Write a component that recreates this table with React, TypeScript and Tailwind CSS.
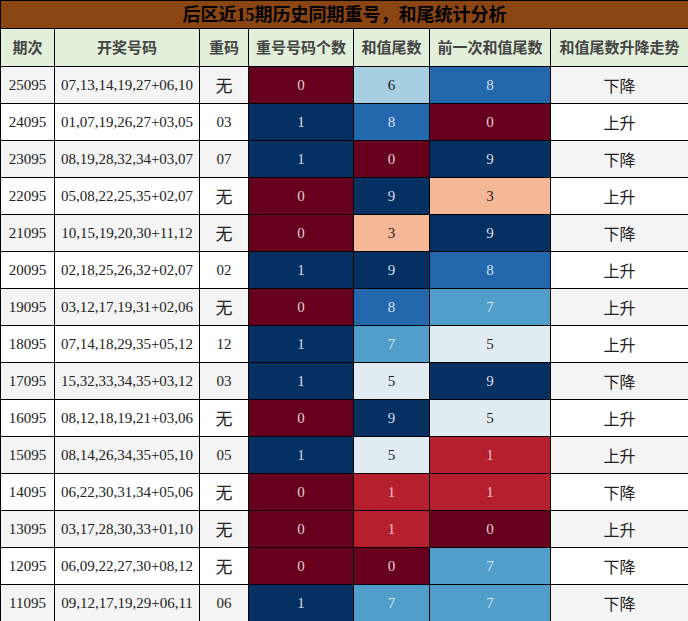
// 后区同期重号 / 和值尾数统计表
const rows: [string, string, string, number, number, number, string][] = [
  ['25095', '07,13,14,19,27+06,10', '无', 0, 6, 8, '下降'],
  ['24095', '01,07,19,26,27+03,05', '03', 1, 8, 0, '上升'],
  ['23095', '08,19,28,32,34+03,07', '07', 1, 0, 9, '下降'],
  ['22095', '05,08,22,25,35+02,07', '无', 0, 9, 3, '上升'],
  ['21095', '10,15,19,20,30+11,12', '无', 0, 3, 9, '下降'],
  ['20095', '02,18,25,26,32+02,07', '02', 1, 9, 8, '上升'],
  ['19095', '03,12,17,19,31+02,06', '无', 0, 8, 7, '上升'],
  ['18095', '07,14,18,29,35+05,12', '12', 1, 7, 5, '上升'],
  ['17095', '15,32,33,34,35+03,12', '03', 1, 5, 9, '下降'],
  ['16095', '08,12,18,19,21+03,06', '无', 0, 9, 5, '上升'],
  ['15095', '08,14,26,34,35+05,10', '05', 1, 5, 1, '上升'],
  ['14095', '06,22,30,31,34+05,06', '无', 0, 1, 1, '下降'],
  ['13095', '03,17,28,30,33+01,10', '无', 0, 1, 0, '上升'],
  ['12095', '06,09,22,27,30+08,12', '无', 0, 0, 7, '下降'],
  ['11095', '09,12,17,19,29+06,11', '06', 1, 7, 7, '下降'],
];

// colour for a tail digit (red -> blue scale)
const tailColor: Record<number, string> = {
  0: 'bg-[#67001f] text-[#e8d0d6]',
  1: 'bg-[#b61f2e] text-[#f0c8cc]',
  2: 'bg-[#d6604d] text-white',
  3: 'bg-[#f6b799] text-[#222]',
  4: 'bg-[#fbe3d6] text-[#222]',
  5: 'bg-[#e1ecf2] text-[#222]',
  6: 'bg-[#a7cfe4] text-[#222]',
  7: 'bg-[#509ec9] text-[#dfeaf3]',
  8: 'bg-[#2367ad] text-[#d6e3f0]',
  9: 'bg-[#053061] text-[#d6dde8]',
};

const countColor: Record<number, string> = {
  0: 'bg-[#67001f] text-[#e8d0d6]',
  1: 'bg-[#053061] text-[#d6dde8]',
};

const headers = ['期次', '开奖号码', '重码', '重号号码个数', '和值尾数', '前一次和值尾数', '和值尾数升降走势'];

export default function App() {
  return (
    <div className="w-[688px] h-[621px] overflow-hidden bg-white font-['Liberation_Serif','Noto_Sans_CJK_SC',serif] text-[#222]">
      <table className="w-[688px] table-fixed border-collapse">
        <colgroup>
          <col className="w-[54px]" />
          <col className="w-[145px]" />
          <col className="w-[49px]" />
          <col className="w-[105px]" />
          <col className="w-[76px]" />
          <col className="w-[121px]" />
          <col className="w-[138px]" />
        </colgroup>
        <thead>
          <tr className="h-[28px]">
            <th
              colSpan={7}
              className="border border-black bg-[#8b4513] text-center text-[18px] font-bold leading-none text-black"
            >
              后区近15期历史同期重号，和尾统计分析
            </th>
          </tr>
          <tr className="h-[38px]">
            {headers.map((h) => (
              <th
                key={h}
                className="border border-black bg-[#e2efda] text-center font-['Noto_Sans_CJK_SC',sans-serif] text-[15px] font-bold text-[#444]"
              >
                {h}
              </th>
            ))}
          </tr>
        </thead>
        <tbody>
          {rows.map(([issue, nums, repeat, count, tail, prev, trend], i) => {
            const rowBg = i % 2 === 0 ? 'bg-[#f4f4f4]' : 'bg-white';
            return (
              <tr key={issue} className="h-[37px]">
                <td className={`border border-black text-center text-[15px] ${rowBg}`}>{issue}</td>
                <td className={`border border-black text-center text-[15px] ${rowBg}`}>{nums}</td>
                <td
                  className={`border border-black text-center ${rowBg} ${
                    repeat === '无' ? "font-['Noto_Sans_CJK_SC',sans-serif] text-[17px]" : 'text-[15px]'
                  }`}
                >
                  {repeat}
                </td>
                <td className={`border border-black text-center text-[15px] ${countColor[count]}`}>{count}</td>
                <td className={`border border-black text-center text-[15px] ${tailColor[tail]}`}>{tail}</td>
                <td className={`border border-black text-center text-[15px] ${tailColor[prev]}`}>{prev}</td>
                <td
                  className={`border border-black text-center font-['Noto_Sans_CJK_SC',sans-serif] text-[16px] ${rowBg}`}
                >
                  {trend}
                </td>
              </tr>
            );
          })}
        </tbody>
      </table>
    </div>
  );
}
